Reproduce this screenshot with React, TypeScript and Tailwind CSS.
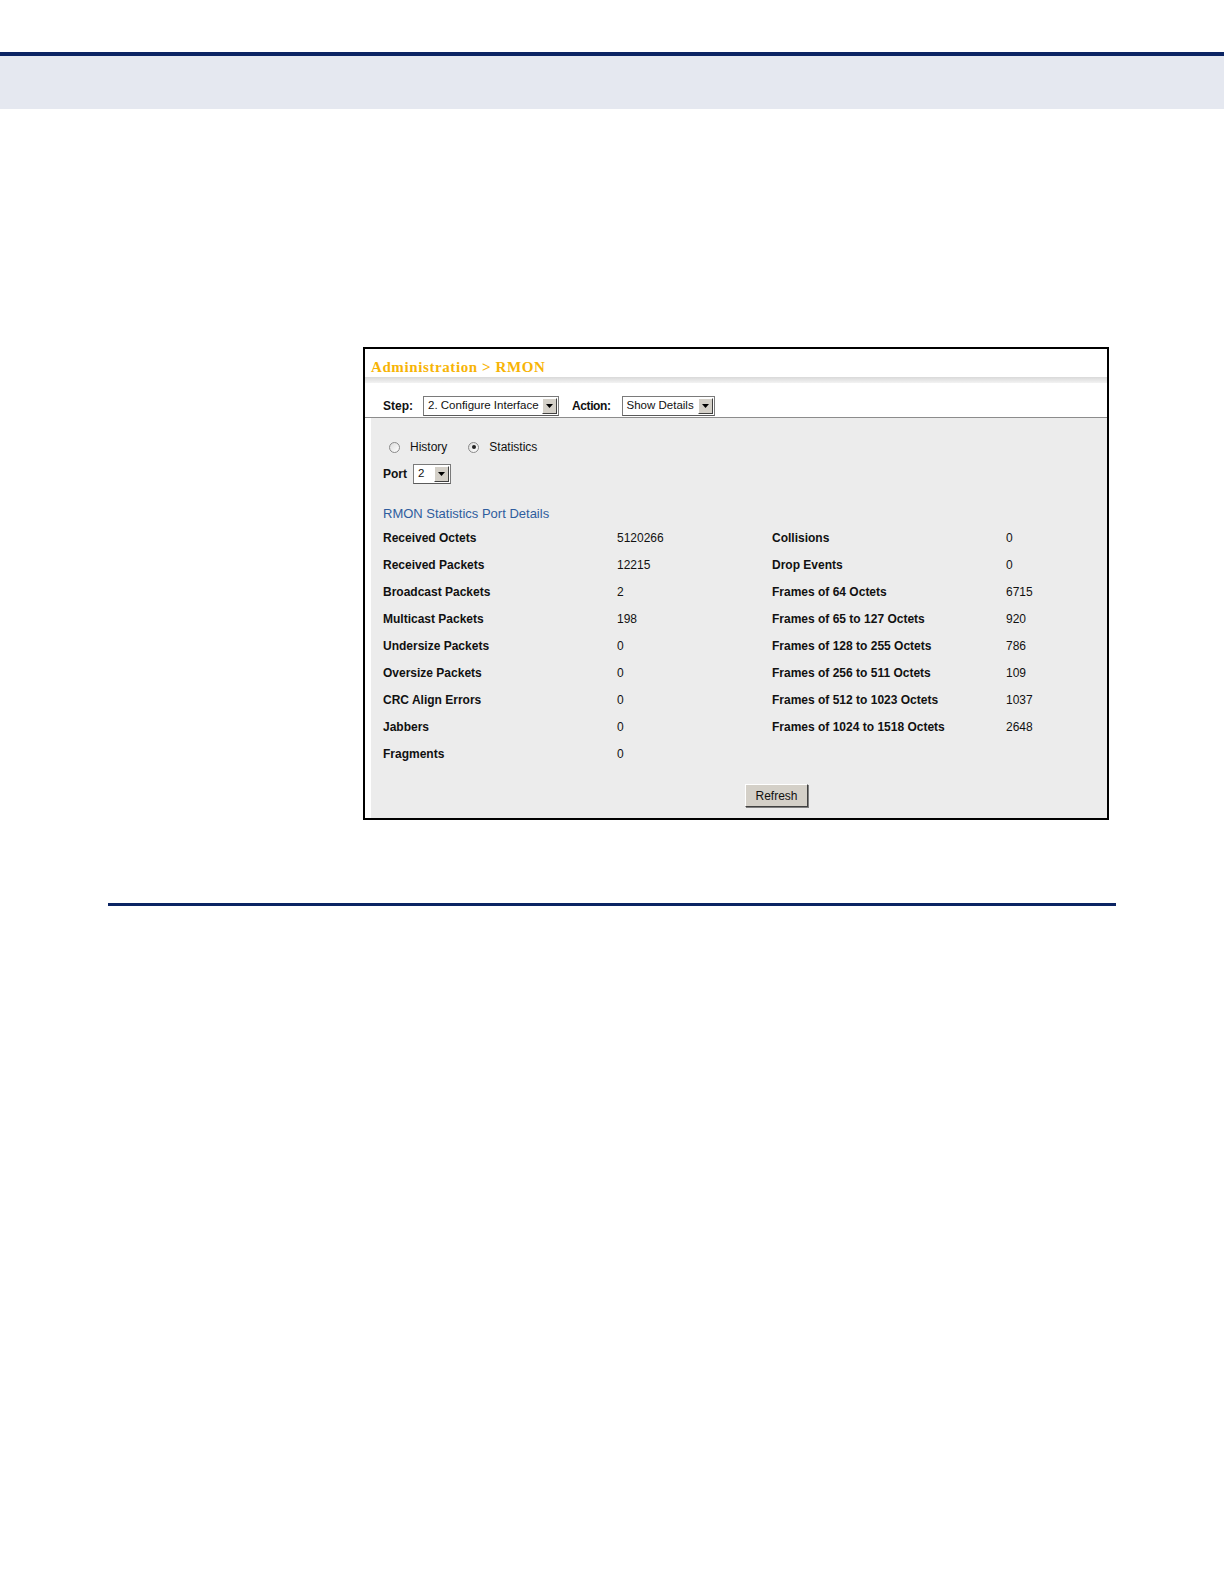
const FONT = { fontFamily: '"Liberation Sans", Arial, sans-serif' };

const LEFT: [string, string][] = [
  ['Received Octets', '5120266'],
  ['Received Packets', '12215'],
  ['Broadcast Packets', '2'],
  ['Multicast Packets', '198'],
  ['Undersize Packets', '0'],
  ['Oversize Packets', '0'],
  ['CRC Align Errors', '0'],
  ['Jabbers', '0'],
  ['Fragments', '0'],
];

const RIGHT: [string, string][] = [
  ['Collisions', '0'],
  ['Drop Events', '0'],
  ['Frames of 64 Octets', '6715'],
  ['Frames of 65 to 127 Octets', '920'],
  ['Frames of 128 to 255 Octets', '786'],
  ['Frames of 256 to 511 Octets', '109'],
  ['Frames of 512 to 1023 Octets', '1037'],
  ['Frames of 1024 to 1518 Octets', '2648'],
];

function Select({ value, width }: { value: string; width: number }) {
  return (
    <div
      className="flex h-[20px] items-stretch border border-[#7a7a7a] border-b-[#5a5a5a] bg-white"
      style={{ width }}
    >
      <span className="flex flex-1 items-center overflow-hidden whitespace-nowrap pl-[4px] text-[11.5px] text-[#111]">
        {value}
      </span>
      <span className="m-[1px] flex w-[15px] items-center justify-center border border-t-white border-l-white border-r-[#404040] border-b-[#404040] bg-[#d4d0c8]">
        <svg width="7" height="4" viewBox="0 0 7 4">
          <path d="M0 0h7L3.5 4z" fill="#000" />
        </svg>
      </span>
    </div>
  );
}

function Radio({ checked }: { checked?: boolean }) {
  return (
    <span className="flex h-[11px] w-[11px] items-center justify-center rounded-full border border-[#8a8a8a] bg-gradient-to-br from-[#dcdcdc] to-white">
      {checked && <span className="h-[4px] w-[4px] rounded-full bg-[#222]" />}
    </span>
  );
}

function Panel() {
  return (
    <div className="ml-[363px] mt-[238px] flex h-[473px] w-[746px] flex-col border-2 border-black bg-white" style={FONT}>
      <div className="flex h-[28px] items-center pl-[6px] pt-[9px]">
        <span
          className="text-[15px] font-bold tracking-[0.6px] text-[#f7b406]"
          style={{ fontFamily: '"Liberation Serif", Georgia, serif' }}
        >
          Administration &gt; RMON
        </span>
      </div>
      <div className="h-[6px] bg-gradient-to-b from-[#d9d9d9] to-[#f3f3f3]" />
      <div className="flex h-[35px] items-center gap-[10px] border-b border-[#8c8c8c] pl-[18px] pt-[11px] text-[12px] text-[#111]">
        <span className="font-bold">Step:</span>
        <Select value="2. Configure Interface" width={136} />
        <span className="ml-[3px] font-bold tracking-[-0.4px]">Action:</span>
        <div className="ml-[1px]">
          <Select value="Show Details" width={93} />
        </div>
      </div>
      <div className="ml-[6px] flex flex-1 flex-col bg-[#ececec] pl-[12px] text-[12px] text-[#111]">
        <div className="ml-[6px] mt-[21px] flex h-[16px] items-center">
          <Radio />
          <span className="ml-[10px]">History</span>
          <span className="ml-[21px]">
            <Radio checked />
          </span>
          <span className="ml-[10px]">Statistics</span>
        </div>
        <div className="mt-[9px] flex h-[20px] items-center gap-[6px]">
          <span className="font-bold">Port</span>
          <Select value="2" width={38} />
        </div>
        <div className="mt-[21px] flex h-[18px] items-center text-[13px] text-[#2f5d9e]">
          RMON Statistics Port Details
        </div>
        <div className="mt-[1px] grid grid-cols-[234px_155px_234px_1fr]">
          {LEFT.map(([label, value], i) => (
            <Row key={label} left={[label, value]} right={RIGHT[i]} />
          ))}
        </div>
        <div className="ml-[362px] mt-[17px]">
          <button className="h-[23px] w-[63px] border border-t-white border-l-white border-r-[#404040] border-b-[#404040] bg-[#d4d0c8] text-[12px] text-[#111] shadow-[1px_1px_0_#808080]">
            Refresh
          </button>
        </div>
      </div>
    </div>
  );
}

function Row({ left, right }: { left: [string, string]; right?: [string, string] }) {
  return (
    <>
      <div className="flex h-[27px] items-center font-bold">{left[0]}</div>
      <div className="flex h-[27px] items-center">{left[1]}</div>
      <div className="flex h-[27px] items-center font-bold">{right?.[0] ?? ''}</div>
      <div className="flex h-[27px] items-center">{right?.[1] ?? ''}</div>
    </>
  );
}

export default function App() {
  return (
    <div className="h-[1584px] w-[1224px] overflow-hidden bg-white pt-[52px]">
      <div className="h-[4px] bg-[#0b2463]" />
      <div className="h-[53px] bg-[#e5e8f0]" />
      <Panel />
      <div className="ml-[108px] mt-[83px] h-[3px] w-[1008px] bg-[#0b2463]" />
    </div>
  );
}
